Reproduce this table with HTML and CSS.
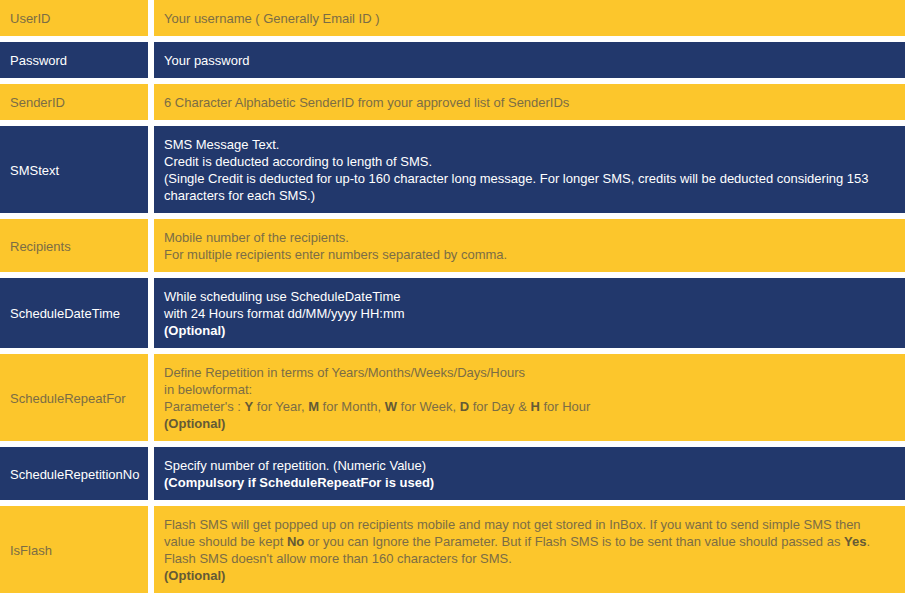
FILE: index.html
```html
<!DOCTYPE html>
<html>
<head>
    <meta charset="utf-8">
    <title>SMS API Parameters</title>
    <link rel="stylesheet" href="styles.css">
</head>
<body>
    <div class="params">
        <div class="cell name yellow">UserID</div>
        <div class="cell desc yellow">Your username ( Generally Email ID )</div>

        <div class="cell name navy">Password</div>
        <div class="cell desc navy">Your password</div>

        <div class="cell name yellow">SenderID</div>
        <div class="cell desc yellow">6 Character Alphabetic SenderID from your approved list of SenderIDs</div>

        <div class="cell name navy">SMStext</div>
        <div class="cell desc navy">
            SMS Message Text.<br>
            Credit is deducted according to length of SMS.<br>
            (Single Credit is deducted for up-to 160 character long message. For longer SMS, credits will be deducted considering 153 characters for each SMS.)
        </div>

        <div class="cell name yellow">Recipients</div>
        <div class="cell desc yellow">
            Mobile number of the recipients.<br>
            For multiple recipients enter numbers separated by comma.
        </div>

        <div class="cell name navy">ScheduleDateTime</div>
        <div class="cell desc navy">
            While scheduling use ScheduleDateTime<br>
            with 24 Hours format dd/MM/yyyy HH:mm<br>
            <b>(Optional)</b>
        </div>

        <div class="cell name yellow">ScheduleRepeatFor</div>
        <div class="cell desc yellow">
            Define Repetition in terms of Years/Months/Weeks/Days/Hours<br>
            in belowformat:<br>
            Parameter's : <b>Y</b> for Year, <b>M</b> for Month, <b>W</b> for Week, <b>D</b> for Day &amp; <b>H</b> for Hour<br>
            <b>(Optional)</b>
        </div>

        <div class="cell name navy">ScheduleRepetitionNo</div>
        <div class="cell desc navy">
            Specify number of repetition. (Numeric Value)<br>
            <b>(Compulsory if ScheduleRepeatFor is used)</b>
        </div>

        <div class="cell name yellow">IsFlash</div>
        <div class="cell desc yellow">
            Flash SMS will get popped up on recipients mobile and may not get stored in InBox. If you want to send simple SMS then value should be kept <b>No</b> or you can Ignore the Parameter. But if Flash SMS is to be sent than value should passed as <b>Yes</b>.<br>
            Flash SMS doesn't allow more than 160 characters for SMS.<br>
            <b>(Optional)</b>
        </div>
    </div>
</body>
</html>
```

FILE: styles.css
```css
*, *::before, *::after {
    box-sizing: border-box;
}

body {
    margin: 0;
    padding: 0;
    background: #fff;
    font-family: "Liberation Sans", Arial, sans-serif;
    font-size: 13px;
    line-height: 17px;
}

.params {
    display: grid;
    grid-template-columns: 148px 1fr;
    gap: 6px;
}

.cell {
    display: flex;
    flex-direction: column;
    justify-content: center;
    padding: 10px 10px 9px 10px;
}

.yellow {
    background: #fcc62c;
    color: #7b6d45;
}

.yellow b {
    color: #655a36;
}

.navy {
    background: #22386c;
    color: #fff;
}

.desc {
    display: block;
}
```
